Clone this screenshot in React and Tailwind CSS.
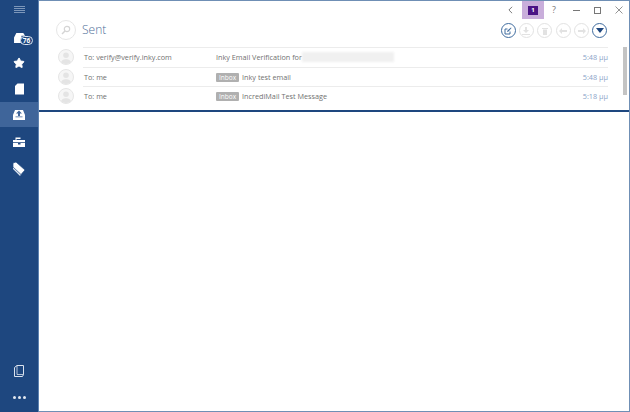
import { Star } from 'lucide-react';

const messages = [
  { to: 'To: verify@verify.inky.com', subject: 'Inky Email Verification for', time: '5:48 μμ', blurred: true },
  { to: 'To: me', subject: 'Inky test email', time: '5:48 μμ', inbox: true },
  { to: 'To: me', subject: 'IncrediMail Test Message', time: '5:18 μμ', inbox: true },
];

function Avatar() {
  return (
    <div className="w-[16px] h-[16px] rounded-full border border-[#e6e6e6] bg-[#f6f6f6] overflow-hidden shrink-0">
      <svg viewBox="0 0 16 16" className="w-full h-full">
        <circle cx="8" cy="6" r="3.2" fill="#e4e4e4" />
        <path d="M2 16c0-4 3-5.500 6-5.500s6 1.500 6 5.500z" fill="#e4e4e4" />
      </svg>
    </div>
  );
}

function RoundButton({ active, children }) {
  return (
    <div className={`w-[15px] h-[15px] rounded-full flex items-center justify-center border ${active ? 'border-[#3f6c9f] border-[1.5px]' : 'border-[#e2e2e2]'}`}>
      {children}
    </div>
  );
}

export default function App() {
  return (
    <div className="w-[630px] h-[412px] flex overflow-hidden bg-white font-['Open_Sans',sans-serif]">
      <aside className="w-[39px] shrink-0 bg-[#1e477f] border-r border-[#5d82b0] flex flex-col items-center text-white">
        <svg viewBox="0 0 11 8" className="w-[11px] h-[8px] mt-[6px]">
          <path d="M0 .5h11M0 2.500h11M0 4.500h11M0 6.500h11" stroke="#7d97ba" strokeWidth="1" />
        </svg>
        <div className="relative w-full h-[24px] mt-[14px]">
          <svg viewBox="0 0 14 13" className="absolute left-[14px] top-[4px] w-[13px] h-[12px]">
            <path d="M0 6 2.500 1H10l2 3H8v5l2 1v2H0z" fill="#fff" />
          </svg>
          <div className="absolute left-[20px] top-[8px] w-[13px] h-[9px] rounded-full bg-[#1e477f] border border-[#dbe3ee] text-[6.500px] leading-[7px] font-bold text-center">76</div>
        </div>
        <Star className="w-[12px] h-[12px] mt-[5px]" fill="#fff" stroke="#fff" />
        <svg viewBox="0 0 9 11" className="w-[9px] h-[12px] mt-[14px]">
          <path d="M2.500 0H9v11H0V2.500z" fill="#fff" />
        </svg>
        <div className="w-[38px] h-[25px] bg-[#3f659a] mt-[7px] flex items-center justify-center">
          <svg viewBox="0 0 12 10" className="w-[12px] h-[10px]">
            <path d="M2 0h8l2 5v5H0V5z" fill="#fff" />
            <path d="M6 .5 3 3.500h2V6h2V3.500h2zM2.500 6.500h7v.8h-7z" fill="#3f659a" />
          </svg>
        </div>
        <svg viewBox="0 0 12 10" className="w-[12px] h-[10px] mt-[10px]">
          <path d="M0 3h2.500V.5h5V2h-4v1H12v7H0z" fill="#fff" />
          <path d="M0 5.200h12v.8H0zM5 5.200h2.500V7.500H5z" fill="#1e477f" />
        </svg>
        <svg viewBox="0 0 12 14" className="w-[12px] h-[14px] mt-[15px]">
          <path d="M0 3 9 11 7 14 0 7z" fill="#dbe3ee" />
          <path d="M0 1 3 0l9 8-4 4.500L0 5z" fill="#fff" stroke="#1e477f" strokeWidth=".7" />
        </svg>
        <div className="mt-auto flex flex-col items-center">
          <svg viewBox="0 0 10 12" className="w-[10px] h-[12px]">
            <path d="M3 .5h6.500v9l-1 2H.500v-9z" fill="none" stroke="#dbe3ee" strokeWidth="1" />
            <path d="M3 .5v9h6.500" fill="none" stroke="#dbe3ee" strokeWidth=".8" />
          </svg>
          <div className="flex gap-[2px] mt-[19px] mb-[13px]">
            <span className="w-[3px] h-[3px] rounded-full bg-[#e3e9f1]" />
            <span className="w-[3px] h-[3px] rounded-full bg-[#e3e9f1]" />
            <span className="w-[3px] h-[3px] rounded-full bg-[#e3e9f1]" />
          </div>
        </div>
      </aside>

      <main className="flex-1 min-w-0 border-r border-b border-[#6f8fb5] flex flex-col">
        <section className="h-[112px] border-t border-[#6f8fb5] border-b-[2px] border-b-[#1e477f]">
          <header className="h-[46px] flex">
            <div className="flex items-center gap-[6px] pl-[17px] pt-[12px] flex-1">
              <div className="w-[20px] h-[20px] rounded-full border border-[#e6e6e6] flex items-center justify-center">
                <svg viewBox="0 0 10 10" className="w-[10px] h-[10px]">
                  <circle cx="6" cy="4" r="2.700" fill="none" stroke="#d4d4d4" strokeWidth="1.200" />
                  <path d="M4 6 1 9" stroke="#d4d4d4" strokeWidth="1.500" />
                </svg>
              </div>
              <span className="text-[12px] font-light text-[#4d6d98] leading-none">Sent</span>
            </div>
            <div className="w-[132px] flex flex-col">
              <div className="h-[18px] relative">
                <svg viewBox="0 0 6 10" className="absolute left-[11px] top-[5px] w-[5px] h-[8px]">
                  <path d="M5 1 1 5l4 4" fill="none" stroke="#777" strokeWidth="1.200" />
                </svg>
                <div className="absolute left-[25px] top-0 w-[22px] h-[18px] bg-[#c9aedb] flex items-center justify-center">
                  <div className="w-[10px] h-[9px] bg-[#4a1385] text-white text-[6px] leading-[9px] text-center font-bold">1</div>
                </div>
                <span className="absolute left-[55px] top-[3px] text-[9px] leading-[12px] text-[#777]">?</span>
                <div className="absolute left-[76px] top-[9px] w-[7px] h-px bg-[#777]" />
                <div className="absolute left-[97px] top-[6px] w-[7px] h-[7px] border border-[#777]" />
                <svg viewBox="0 0 8 8" className="absolute left-[118px] top-[5px] w-[8px] h-[8px]">
                  <path d="M.5.5l7 7M7.500.500l-7 7" stroke="#888" strokeWidth=".9" />
                </svg>
              </div>
              <div className="flex gap-[3.400px] pl-[3.500px] mt-[4px]">
                <RoundButton active>
                  <svg viewBox="0 0 8 8" className="w-[8px] h-[8px]">
                    <path d="M6 4.500V7H1V2h2.500" fill="none" stroke="#3f6c9f" strokeWidth="1" />
                    <path d="M3 5l.5-1.500L7 .5 7.500 1 4.500 4.500z" fill="#3f6c9f" />
                  </svg>
                </RoundButton>
                <RoundButton>
                  <svg viewBox="0 0 8 8" className="w-[8px] h-[8px]"><path d="M3 0h2v3h2L4 6 1 3h2zM0 7h8v1H0z" fill="#e2e2e2" /></svg>
                </RoundButton>
                <RoundButton>
                  <svg viewBox="0 0 6 8" className="w-[6px] h-[8px]"><path d="M0 1h6v1H0zM1 2.500h4V8H1z" fill="#e2e2e2" /></svg>
                </RoundButton>
                <RoundButton>
                  <svg viewBox="0 0 8 6" className="w-[8px] h-[6px]"><path d="M3 0v2h5v2H3v2L0 3z" fill="#e2e2e2" /></svg>
                </RoundButton>
                <RoundButton>
                  <svg viewBox="0 0 8 6" className="w-[8px] h-[6px]"><path d="M5 0v2H0v2h5v2l3-3z" fill="#e2e2e2" /></svg>
                </RoundButton>
                <RoundButton active>
                  <svg viewBox="0 0 8 5" className="w-[8px] h-[5px]"><path d="M0 0h8L4 5z" fill="#1e477f" /></svg>
                </RoundButton>
              </div>
            </div>
          </header>

          <div className="relative">
            {messages.map((m) => (
              <div key={m.subject} className="h-[19.700px] flex items-center pl-[19px] pr-[21px]">
                <Avatar />
                <div className="flex-1 ml-[9px] h-full flex items-center border-t border-[#ececec] text-[7.250px] text-[#707070]">
                  <span className="w-[133px] shrink-0 pl-[1px]">{m.to}</span>
                  {m.inbox && (
                    <span className="bg-[#b0b0b0] text-white text-[6.500px] leading-[9px] px-[3px] rounded-[1px] mr-[3px]">Inbox</span>
                  )}
                  <span>{m.subject}</span>
                  {m.blurred && <div className="w-[92px] h-[10px] bg-[#f0f0f0] blur-[1px]" />}
                  <span className="ml-auto text-[#8aa3c8]">{m.time}</span>
                </div>
              </div>
            ))}
            <div className="absolute right-[2px] top-0 w-[4px] h-[48px] bg-[#c4c4c4]" />
          </div>
        </section>
      </main>
    </div>
  );
}
